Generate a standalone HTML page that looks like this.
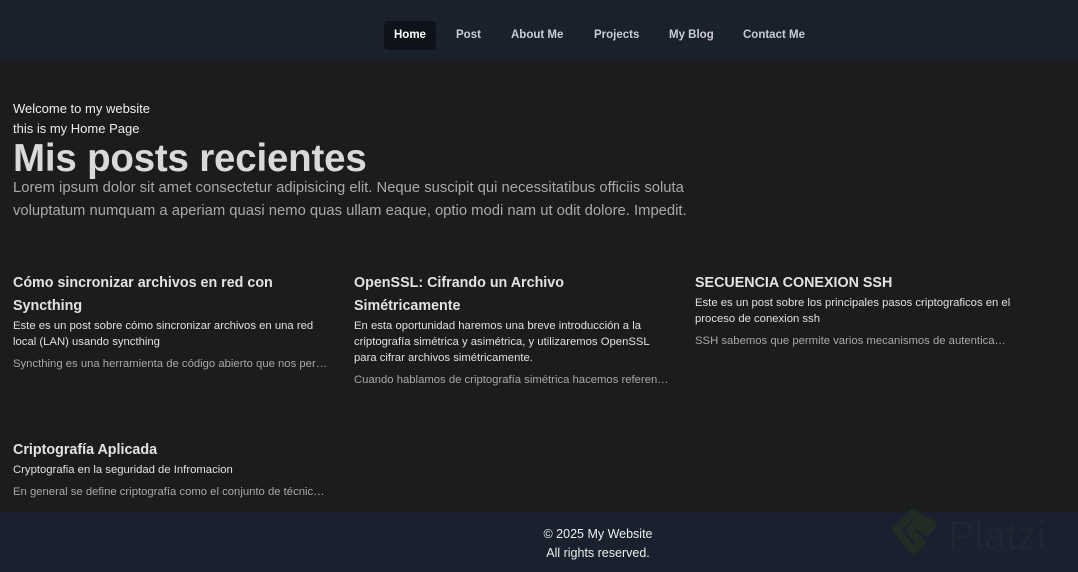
<!DOCTYPE html>
<html><head><meta charset="utf-8"><style>
*{margin:0;padding:0;box-sizing:border-box}
html,body{width:1078px;height:572px;overflow:hidden;background:#1b1c1e;font-family:"Liberation Sans",sans-serif;color:#e6e6e6}
header{height:61px;background:#1a212d;position:relative}
nav a{position:absolute;top:21px;height:29px;line-height:29px;font-size:11.5px;font-weight:bold;color:#c9ccd2;text-decoration:none}
nav a.home{background:#0e121b;color:#fff;border-radius:4px;padding:0 10px;left:384px}
main{position:relative;height:451px}
.w{position:absolute;left:13px;font-size:13px;color:#eee}
h1{position:absolute;left:13px;top:76px;font-size:38.5px;color:#d9d9d9;font-weight:bold;letter-spacing:-0.2px}
.lorem{position:absolute;left:13px;top:116px;width:690px;font-size:14.8px;line-height:23px;color:#a9a9a9}
.card{position:absolute;width:305px}
.card h3{font-size:14.3px;line-height:23px;color:#e3e3e3;font-weight:bold}
.card p{font-size:11.3px;line-height:16px;color:#e0e0e0;width:318px}
.card .ex{margin-top:6px;color:#a8a8a8;width:316px;white-space:nowrap;overflow:hidden;text-overflow:ellipsis}
footer{position:absolute;top:512px;left:0;width:1078px;height:60px;background:#18212d;text-align:center;font-size:12.5px;line-height:19px;color:#eee;padding-top:13px}
footer div{padding-left:118px}
.pl{position:absolute;left:888px;top:505px}
</style></head><body>
<header><nav>
<a class="home">Home</a>
<a style="left:456px">Post</a>
<a style="left:511px">About Me</a>
<a style="left:594px">Projects</a>
<a style="left:669px">My Blog</a>
<a style="left:743px">Contact Me</a>
</nav></header>
<main>
<div class="w" style="top:40px">Welcome to my website</div>
<div class="w" style="top:60px">this is my Home Page</div>
<h1>Mis posts recientes</h1>
<div class="lorem">Lorem ipsum dolor sit amet consectetur adipisicing elit. Neque suscipit qui necessitatibus officiis soluta voluptatum numquam a aperiam quasi nemo quas ullam eaque, optio modi nam ut odit dolore. Impedit.</div>
<div class="card" style="left:13px;top:211px"><h3>Cómo sincronizar archivos en red con Syncthing</h3><p>Este es un post sobre cómo sincronizar archivos en una red local (LAN) usando syncthing</p><p class="ex">Syncthing es una herramienta de código abierto que nos permite sincronizar</p></div>
<div class="card" style="left:354px;top:211px"><h3>OpenSSL: Cifrando un Archivo Simétricamente</h3><p>En esta oportunidad haremos una breve introducción a la criptografía simétrica y asimétrica, y utilizaremos OpenSSL para cifrar archivos simétricamente.</p><p class="ex">Cuando hablamos de criptografía simétrica hacemos referencia</p></div>
<div class="card" style="left:695px;top:211px"><h3>SECUENCIA CONEXION SSH</h3><p>Este es un post sobre los principales pasos criptograficos en el proceso de conexion ssh</p><p class="ex">SSH sabemos que permite varios mecanismos de autenticación</p></div>
<div class="card" style="left:13px;top:378px"><h3>Criptografía Aplicada</h3><p>Cryptografia en la seguridad de Infromacion</p><p class="ex" style="width:316px">En general se define criptografía como el conjunto de técnicas para</p></div>
</main>
<footer><div>© 2025 My Website</div><div>All rights reserved.</div></footer>
<svg class="pl" width="190" height="62" viewBox="0 0 190 62">
<path d="M25 8 L8 25 L25 45 L33 38 L22 25 L29 18 L38 27 L45 20 Z" fill="none" stroke="#232b25" stroke-width="8" stroke-linejoin="round"/>
<text x="60" y="44" font-family="Liberation Sans,sans-serif" font-size="40" fill="#1e2632">Platzi</text>
</svg>
</body></html>
